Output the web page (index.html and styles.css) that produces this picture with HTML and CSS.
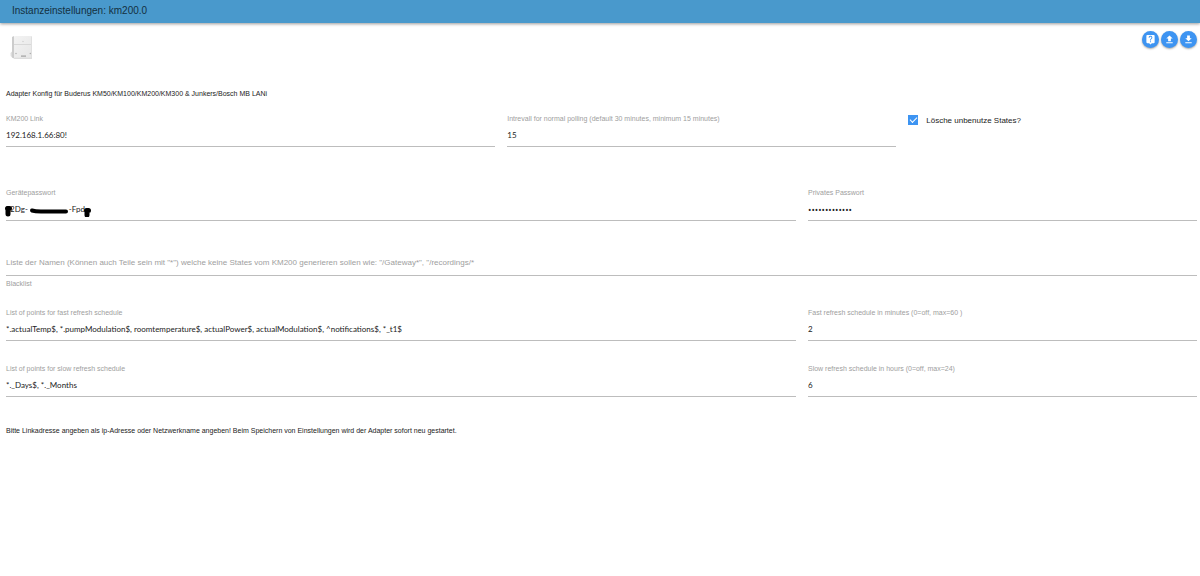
FILE: index.html
```html
<!DOCTYPE html>
<html lang="de">
<head>
  <meta charset="UTF-8" />
  <title>Instanzeinstellungen: km200.0</title>
  <link rel="stylesheet" href="styles.css">
</head>
<body>
  <header class="titlebar">
    <h1>Instanzeinstellungen: km200.0</h1>
  </header>

  <main class="content">
    <div class="toolbar">
      <svg class="logo" viewBox="0 0 26 26" role="img" aria-label="KM200">
        <defs>
          <linearGradient id="front" x1="0" y1="0" x2="1" y2="1">
            <stop offset="0" stop-color="#f3f3f3" />
            <stop offset="1" stop-color="#e6e6e6" />
          </linearGradient>
        </defs>
        <path d="M0.500 18 3 15.500V22.500H2Q0 21 0.500 18Z" fill="#dddddd" />
        <path d="M2 2 4 1V23.500L2 22.500Z" fill="#cccccc" />
        <rect x="4" y="1" width="18" height="22.500" rx="1" fill="url(#front)" />
        <path d="M4 9.500H22" stroke="#d8d8d8" stroke-width="1" />
        <path d="M21.500 1.500V23" stroke="#e0e0e0" stroke-width="1" />
        <path d="M4 23.300H22" stroke="#d8d8d8" stroke-width="1" />
        <circle cx="13" cy="6.500" r="0.700" fill="#cccccc" />
        <circle cx="6" cy="18.500" r="0.700" fill="#aaaaaa" />
        <circle cx="20.300" cy="18.500" r="0.700" fill="#aaaaaa" />
        <rect x="11" y="20.500" width="5" height="1.200" fill="#a0a0a0" />
      </svg>
      <div class="actions">
        <button type="button" class="round" aria-label="Hilfe">
          <svg viewBox="0 0 24 24"><path d="M19 2H5a2 2 0 0 0-2 2v14c0 1.100.9 2 2 2h4l3 3 3-3h4c1.100 0 2-.9 2-2V4a2 2 0 0 0-2-2zm-6 16h-2v-2h2v2zm2.070-7.750-.9.920C13.450 11.900 13 12.500 13 14h-2v-.5c0-1.100.45-2.100 1.170-2.830l1.240-1.260A2 2 0 1 0 10 8H8a4 4 0 1 1 7.070 2.250z" /></svg>
        </button>
        <button type="button" class="round" aria-label="Einstellungen laden">
          <svg viewBox="0 0 24 24"><path d="M9 16h6v-6h4l-7-7-7 7h4zM5 18h14v2H5z" /></svg>
        </button>
        <button type="button" class="round" aria-label="Einstellungen speichern">
          <svg viewBox="0 0 24 24"><path d="M19 9h-4V3H9v6H5l7 7 7-7zM5 18v2h14v-2H5z" /></svg>
        </button>
      </div>
    </div>

    <form>
      <p class="note">Adapter Konfig für Buderus KM50/KM100/KM200/KM300 &amp; Junkers/Bosch MB LANi</p>

      <div class="row row-tall">
        <div class="field s5">
          <label for="connection">KM200 Link</label>
          <input type="text" id="connection" value="192.168.1.66:80!" />
        </div>
        <div class="field s4">
          <label for="interval">Intrevall for normal polling (default 30 minutes, minimum 15 minutes)</label>
          <input type="text" id="interval" value="15" />
        </div>
        <div class="check s3">
          <input type="checkbox" id="deleteUnused" checked />
          <label for="deleteUnused">Lösche unbenutze States?</label>
        </div>
      </div>

      <div class="row">
        <div class="field s8">
          <label for="accesskey">Gerätepasswort</label>
          <input type="text" id="accesskey" value="&nbsp;&nbsp;2Dg-&nbsp;&nbsp;&nbsp;&nbsp;&nbsp;&nbsp;&nbsp;&nbsp;&nbsp;&nbsp;&nbsp;&nbsp;&nbsp;&nbsp;&nbsp;&nbsp;&nbsp;&nbsp;&nbsp;&nbsp;-Fpd" />
          <svg class="marker" viewBox="0 0 88 14" aria-hidden="true">
            <path d="M3.500 5.500H5.500M4 6V11" stroke-width="5" />
            <path d="M28 7.500Q31 8.500 37 8.500H62" stroke-width="4" />
            <path d="M82.500 7.500H84.500M83 8V12" stroke-width="5" />
          </svg>
        </div>
        <div class="field s4">
          <label for="privatepw">Privates Passwort</label>
          <input type="password" id="privatepw" value="0000000000000" />
        </div>
      </div>

      <div class="row row-list">
        <div class="field field-list s12">
          <input type="text" id="blacklist" placeholder="Liste der Namen (Können auch Teile sein mit &quot;*&quot;) welche keine States vom KM200 generieren sollen wie: &quot;/Gateway*&quot;, &quot;/recordings/*" />
          <label for="blacklist">Blacklist</label>
        </div>
      </div>

      <div class="row">
        <div class="field s8">
          <label for="fast">List of points for fast refresh schedule</label>
          <input type="text" id="fast" value="*.actualTemp$, *.pumpModulation$, roomtemperature$, actualPower$, actualModulation$, ^notifications$, *_t1$" />
        </div>
        <div class="field s4">
          <label for="fastRate">Fast refresh schedule in minutes (0=off, max=60 )</label>
          <input type="text" id="fastRate" value="2" />
        </div>
      </div>

      <div class="row row-last">
        <div class="field s8">
          <label for="slow">List of points for slow refresh schedule</label>
          <input type="text" id="slow" value="*._Days$, *._Months" />
        </div>
        <div class="field s4">
          <label for="slowRate">Slow refresh schedule in hours (0=off, max=24)</label>
          <input type="text" id="slowRate" value="6" />
        </div>
      </div>

      <p class="note">Bitte Linkadresse angeben als ip-Adresse oder Netzwerkname angeben! Beim Speichern von Einstellungen wird der Adapter sofort neu gestartet.</p>
    </form>
  </main>
</body>
</html>
```

FILE: styles.css
```css
* {
  box-sizing: border-box;
}
body {
  margin: 0;
  background: #fff;
  color: #222;
  font-family: "Liberation Sans", Arial, sans-serif;
  font-size: 7px;
}
.titlebar {
  height: 23px;
  padding: 0 12px;
  background: #4999cc;
  box-shadow: 0 1px 3px rgba(0, 0, 0, 0.4);
}
.titlebar h1 {
  margin: 0;
  color: #14303f;
  font-size: 10px;
  font-weight: normal;
  line-height: 22px;
}
.content {
  padding: 8px 3px 0 6px;
}
.toolbar {
  display: flex;
  justify-content: space-between;
  align-items: flex-start;
  height: 56px;
}
.logo {
  width: 26px;
  height: 26px;
  margin: 4px;
}
.actions {
  display: flex;
  gap: 2px;
}
.round {
  display: flex;
  align-items: center;
  justify-content: center;
  width: 17px;
  height: 17px;
  padding: 0;
  border: none;
  border-radius: 50%;
  background: #3d94f2;
  box-shadow: 0 1px 2px rgba(0, 0, 0, 0.35);
  cursor: pointer;
}
.round svg {
  width: 11px;
  height: 11px;
  fill: #fff;
}
.note {
  margin: 0;
  line-height: 14px;
}
.row {
  display: grid;
  grid-template-columns: repeat(12, 1fr);
  column-gap: 12px;
  margin: 12px 0 22px;
}
.row-tall {
  margin-bottom: 40px;
}
.row-list {
  margin-bottom: 17px;
}
.row-last {
  margin-bottom: 27px;
}
.s3 { grid-column: span 3; }
.s4 { grid-column: span 4; }
.s5 { grid-column: span 5; }
.s8 { grid-column: span 8; }
.s12 { grid-column: span 12; }
.field {
  position: relative;
  display: flex;
  flex-direction: column;
}
.field label {
  color: #9e9e9e;
  line-height: 12px;
}
.field input {
  width: 100%;
  height: 22px;
  padding: 0 0 1px;
  border: none;
  border-bottom: 1px solid #bdbdbd;
  background: transparent;
  color: #222;
  font-family: Lato, "Segoe UI", sans-serif;
  font-size: 8px;
  outline: none;
}
.field input[type="password"] {
  font-family: "Open Sans", sans-serif;
  font-size: 9px;
}
.field input::placeholder {
  color: #9e9e9e;
  font-family: "Liberation Sans", Arial, sans-serif;
  opacity: 1;
}
.field-list input {
  height: 33px;
  padding-top: 6px;
}
.field-list label {
  padding-top: 2px;
}
.marker {
  position: absolute;
  left: -2px;
  top: 16px;
  width: 88px;
  height: 14px;
  fill: none;
  stroke: #000;
  stroke-linecap: round;
}
.check {
  display: flex;
  align-items: center;
  gap: 8px;
  height: 14px;
}
.check input {
  display: flex;
  align-items: center;
  justify-content: center;
  appearance: none;
  width: 10px;
  height: 10px;
  margin: 0;
  border: 1px solid #3d94f2;
}
.check input:checked {
  background: #3d94f2;
}
.check input:checked::before {
  content: "";
  width: 6px;
  height: 3px;
  margin-bottom: 2px;
  border: solid #fff;
  border-width: 0 0 1px 1px;
  transform: rotate(-45deg);
}
.check label {
  font-size: 8px;
}
```
